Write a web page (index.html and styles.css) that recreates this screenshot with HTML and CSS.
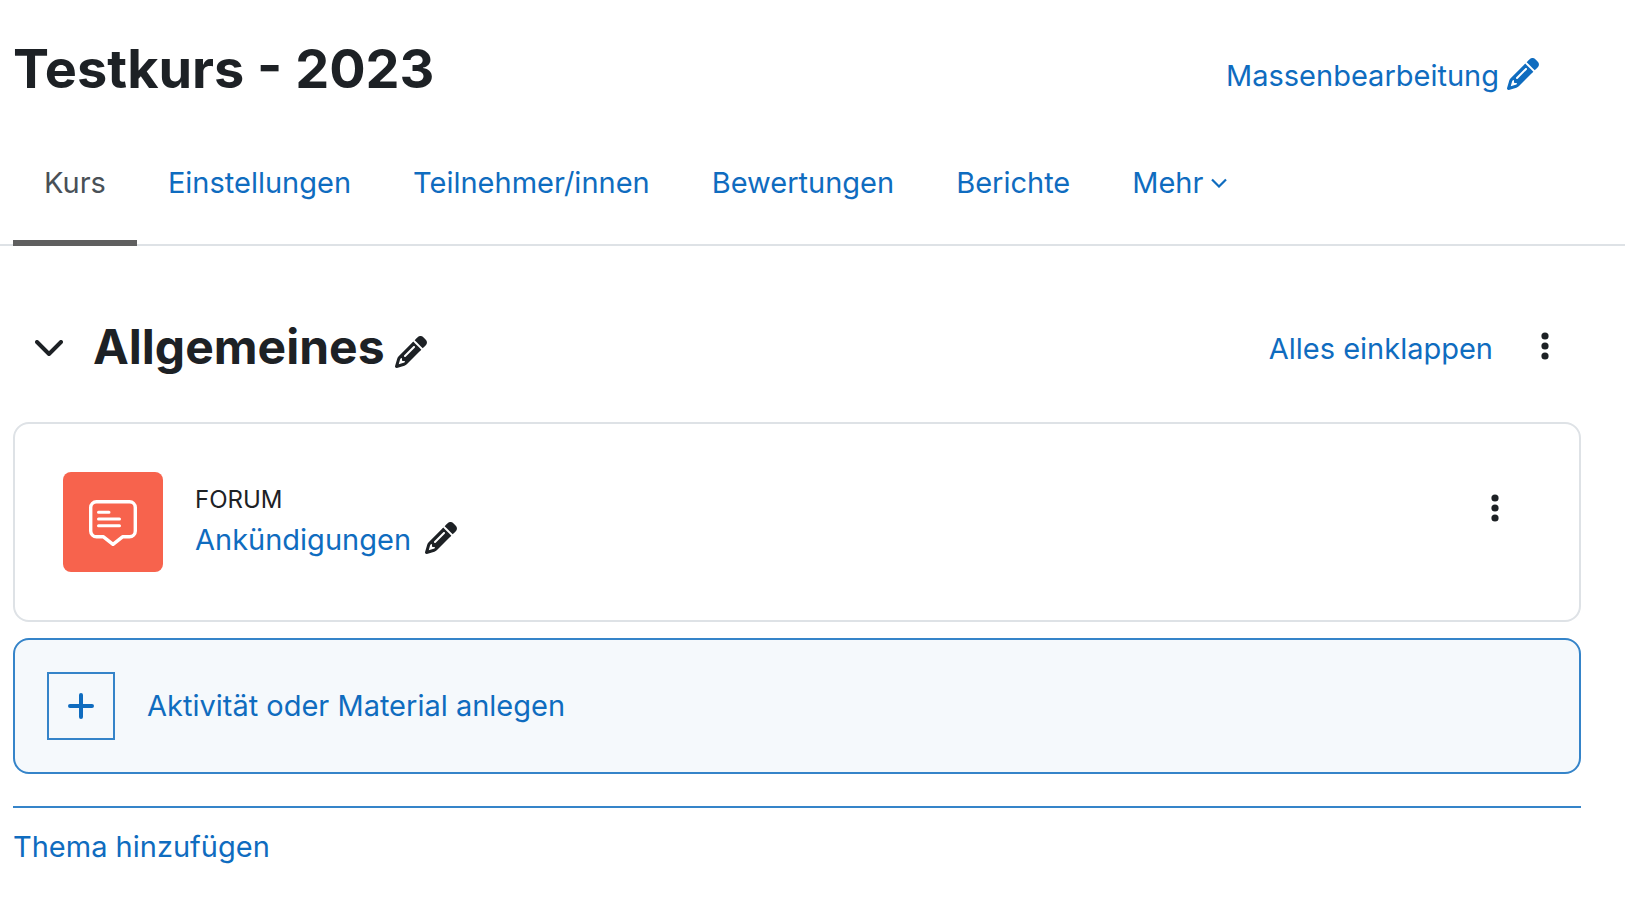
FILE: index.html
```html
<!DOCTYPE html>
<html lang="de">
<head>
  <meta charset="UTF-8" />
  <title>Testkurs - 2023</title>
  <meta name="viewport" content="width=device-width, initial-scale=1.0"/>
  <link rel="stylesheet" href="styles.css">
</head>
<body>
  <!-- Shared icons -->
  <svg class="icon-defs" aria-hidden="true">
    <symbol id="icon-pencil" viewBox="0 0 512 512">
      <path fill="currentColor" d="M410.3 231l11.3-11.3-33.9-33.9-62.1-62.1L291.7 89.8l-11.3 11.3-22.6 22.6L58.6 322.9c-10.4 10.4-18 23.3-22.2 37.4L1 480.7c-2.5 8.4-.2 17.5 6.1 23.7s15.3 8.5 23.7 6.1l120.3-35.4c14.1-4.2 27-11.8 37.4-22.2L387.7 253.7 410.3 231zM160 399.4l-9.1 22.7c-4 3.1-8.5 5.4-13.3 6.9L59.4 452l23-78.1c1.4-4.9 3.8-9.4 6.9-13.3l22.7-9.1v32c0 8.8 7.2 16 16 16h32zM362.7 18.7L348.3 33.2 325.7 55.8 314.3 67.1l33.9 33.9 62.1 62.1 33.9 33.9 11.3-11.3 22.6-22.6 14.5-14.5c25-25 25-65.5 0-90.5L453.3 18.7c-25-25-65.5-25-90.5 0zm-47.4 168l-144 144c-6.2 6.2-16.4 6.2-22.6 0s-6.2-16.4 0-22.6l144-144c6.2-6.2 16.4-6.2 22.6 0s6.2 16.4 0 22.6z"/>
    </symbol>
    <symbol id="icon-dots" viewBox="0 0 8 28">
      <g fill="currentColor">
        <circle cx="4" cy="4" r="3.6"/>
        <circle cx="4" cy="14" r="3.6"/>
        <circle cx="4" cy="24" r="3.6"/>
      </g>
    </symbol>
  </svg>

  <header class="page-header">
    <h1>Testkurs - 2023</h1>
    <button type="button" class="link-btn bulk-btn">
      Massenbearbeitung
      <svg class="icon"><use href="#icon-pencil"/></svg>
    </button>
  </header>

  <nav class="tabs">
    <a href="#" class="tab active" aria-current="page">Kurs</a>
    <a href="#" class="tab">Einstellungen</a>
    <a href="#" class="tab">Teilnehmer/innen</a>
    <a href="#" class="tab">Bewertungen</a>
    <a href="#" class="tab">Berichte</a>
    <a href="#" class="tab">Mehr
      <svg class="tab-arrow" viewBox="0 0 16 10"><path d="M1 1.5l7 7 7-7" fill="none" stroke="currentColor" stroke-width="2.2"/></svg>
    </a>
  </nav>

  <main class="course">
    <div class="section-header">
      <button type="button" class="icon-btn toggle-btn" aria-label="Einklappen">
        <svg class="toggle-arrow" viewBox="0 0 28 16"><path d="M2 2l12 12L26 2" fill="none" stroke="currentColor" stroke-width="4" stroke-linecap="round" stroke-linejoin="round"/></svg>
      </button>
      <h2>Allgemeines</h2>
      <button type="button" class="icon-btn rename-btn" aria-label="Thema bearbeiten">
        <svg class="icon"><use href="#icon-pencil"/></svg>
      </button>
      <a href="#" class="collapse-all">Alles einklappen</a>
      <button type="button" class="icon-btn menu-btn" aria-label="Menü">
        <svg class="dots"><use href="#icon-dots"/></svg>
      </button>
    </div>

    <div class="activity">
      <div class="activity-icon">
        <svg viewBox="0 0 48 46" fill="none" stroke="#fff" stroke-width="3.4" stroke-linecap="round" stroke-linejoin="round">
          <path d="M7.500 1.700h33a5.800 5.800 0 0 1 5.800 5.800v23.500a5.800 5.800 0 0 1-5.800 5.800h-7L24 44.300l-9.500-7.500h-7a5.800 5.800 0 0 1-5.800-5.800V7.500a5.800 5.800 0 0 1 5.800-5.800z"/>
          <path stroke-width="3" d="M9.500 12.200h10.500M9.500 19h21M9.500 25.700h21"/>
        </svg>
      </div>
      <div class="activity-info">
        <div class="activity-type">FORUM</div>
        <div class="activity-name">
          <a href="#">Ankündigungen</a>
          <button type="button" class="icon-btn edit-btn" aria-label="Titel bearbeiten">
            <svg class="icon"><use href="#icon-pencil"/></svg>
          </button>
        </div>
      </div>
      <button type="button" class="icon-btn activity-menu" aria-label="Menü">
        <svg class="dots"><use href="#icon-dots"/></svg>
      </button>
    </div>

    <button type="button" class="add-activity">
      <span class="add-icon">
        <svg viewBox="0 0 26 26"><path d="M13 2v22M2 13h22" fill="none" stroke="currentColor" stroke-width="4" stroke-linecap="round"/></svg>
      </span>
      Aktivität oder Material anlegen
    </button>

    <div class="add-section">
      <a href="#">Thema hinzufügen</a>
    </div>
  </main>
</body>
</html>
```
FILE: styles.css
```css
* {
  margin: 0;
  padding: 0;
  box-sizing: border-box;
}

body {
  font-family: Inter, "Liberation Sans", sans-serif;
  font-size: 29px;
  line-height: 44px;
  color: #1d2125;
  background: #fff;
}

a {
  color: #0f6cbf;
  text-decoration: none;
}

a:hover {
  text-decoration: underline;
}

svg {
  display: block;
  flex-shrink: 0;
}

button {
  font: inherit;
  border: none;
  background: none;
  cursor: pointer;
}

h1 {
  font-size: 54px;
  line-height: 68px;
}

h2 {
  font-size: 48px;
  line-height: 60px;
}

.icon-defs {
  position: absolute;
  width: 0;
  height: 0;
}

.icon {
  width: 32px;
  height: 32px;
}

.dots {
  width: 8px;
  height: 28px;
}

.icon-btn {
  color: #1d2125;
}

.link-btn {
  color: #0f6cbf;
}

/* Header */
.page-header {
  display: flex;
  justify-content: space-between;
  align-items: center;
  padding: 35px 86px 0 13px;
}

.bulk-btn {
  display: flex;
  align-items: center;
  gap: 8px;
  padding-top: 14px;
}

.bulk-btn .icon {
  margin-bottom: 4px;
}

/* Tabs */
.tabs {
  display: flex;
  margin-top: 35px;
  padding-left: 13px;
  border-bottom: 2px solid #dee2e6;
}

.tab {
  display: flex;
  align-items: center;
  gap: 8px;
  height: 108px;
  margin-bottom: -2px;
  padding: 0 31px 12px;
  border-bottom: 6px solid transparent;
}

.tab.active {
  color: #495057;
  border-bottom-color: #5f5f5f;
}

.tab-arrow {
  width: 16px;
  height: 10px;
}

/* Section */
.course {
  padding: 71px 44px 24px 13px;
}

.section-header {
  display: flex;
  align-items: center;
  margin-bottom: 45px;
}

.toggle-btn {
  padding: 2px 30px 0 22px;
}

.toggle-arrow {
  width: 28px;
  height: 16px;
}

.rename-btn {
  padding: 10px 0 0 10px;
}

.collapse-all {
  margin-left: auto;
  padding-top: 4px;
}

.menu-btn {
  padding: 0 32px 2px 48px;
}

.activity {
  display: flex;
  align-items: center;
  gap: 32px;
  padding: 48px;
  border: 2px solid #dee2e6;
  border-radius: 16px;
}

.activity-icon {
  display: flex;
  align-items: center;
  justify-content: center;
  width: 100px;
  height: 100px;
  padding-top: 2px;
  border-radius: 8px;
  background: #f7634d;
}

.activity-icon svg {
  width: 48px;
  height: 46px;
}

.activity-type {
  font-size: 24px;
  line-height: 36px;
}

.activity-name {
  display: flex;
  align-items: center;
  gap: 14px;
}

.edit-btn {
  padding-bottom: 4px;
}

.activity-menu {
  margin-left: auto;
  padding: 0 32px 28px;
}

.add-activity {
  display: flex;
  align-items: center;
  gap: 32px;
  width: 100%;
  margin-top: 16px;
  padding: 32px;
  border: 2px solid #3584c9;
  border-radius: 16px;
  background: #f5f9fc;
  color: #0f6cbf;
}

.add-icon {
  display: flex;
  align-items: center;
  justify-content: center;
  width: 68px;
  height: 68px;
  border: 2px solid #3584c9;
}

.add-icon svg {
  width: 26px;
  height: 26px;
}

.add-section {
  margin-top: 32px;
  padding-top: 17px;
  border-top: 2px solid #3584c9;
}

@media (max-width: 768px) {
  .tabs {
    flex-wrap: wrap;
  }
}
```
